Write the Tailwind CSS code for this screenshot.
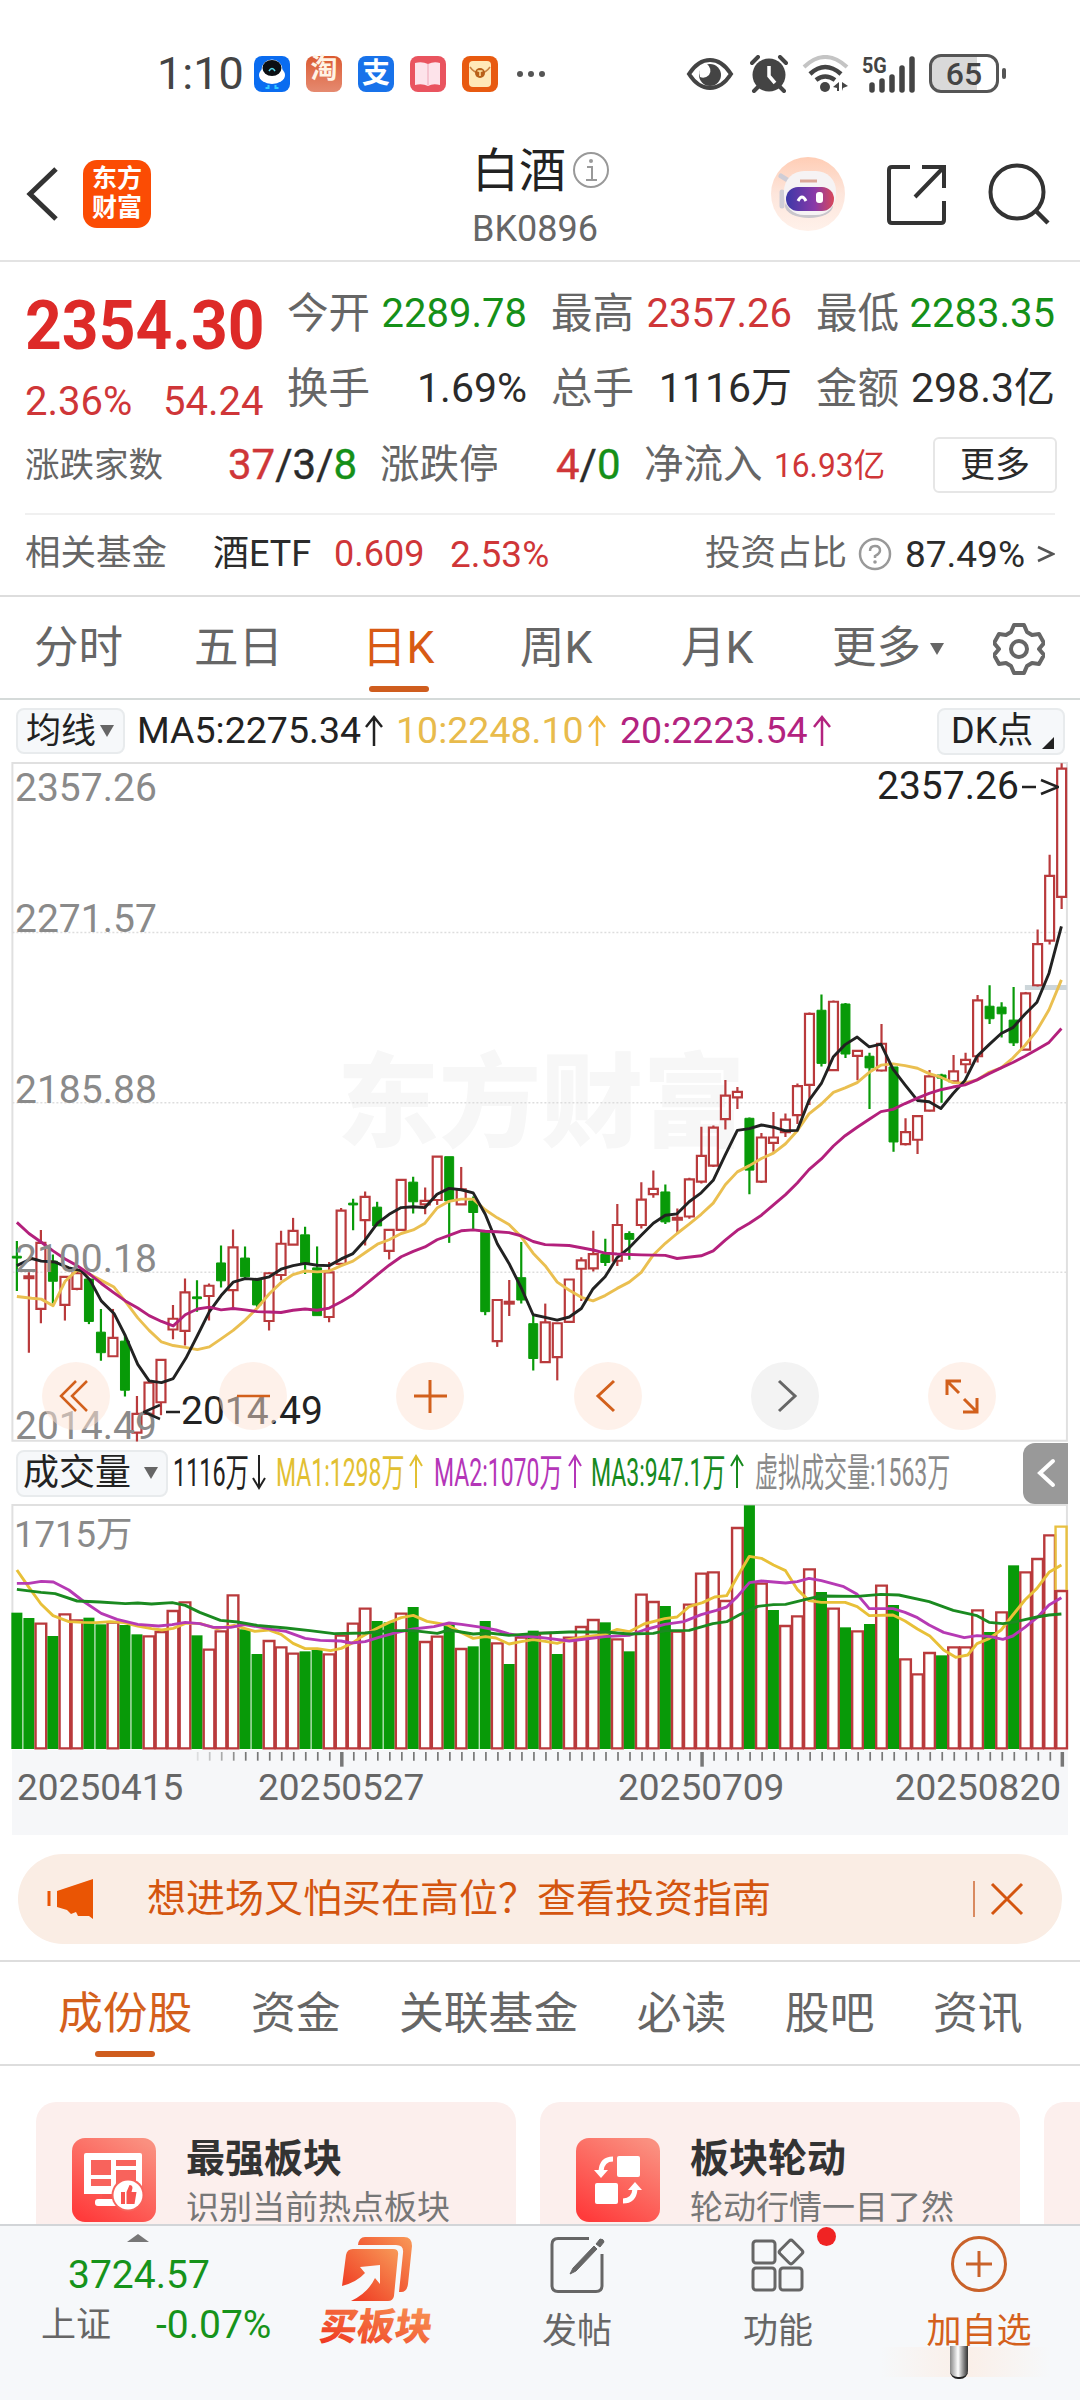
<!DOCTYPE html>
<html lang="zh-CN">
<head>
    <meta charset="UTF-8">
    <meta name="viewport" content="width=device-width, initial-scale=1.0">
    <title>白酒 BK0896</title>
    <script src="https://cdn.jsdelivr.net/npm/@tailwindcss/browser@4"></script>
    <style>
        body {
            font-family: Roboto, 'Noto Sans CJK SC', sans-serif;
        }
    </style>
</head>
<body class="w-[1080px] h-[2400px] overflow-hidden bg-white text-[#666] leading-none whitespace-nowrap">
    <div class="w-[1080px] h-[2400px] flex flex-col overflow-hidden">

        <!-- Status bar -->
        <div class="h-[147px] shrink-0 flex items-center pl-[157px] pr-[74px] text-[#444]">
            <span class="text-[45px] w-[97px]">1:10</span>
            <div class="flex items-center gap-4">
                <svg class="w-9 h-9" viewBox="0 0 36 36">
                    <rect width="36" height="36" rx="8" fill="#0a6cf0"/>
                    <ellipse cx="18" cy="19" rx="13" ry="9" fill="#fff"/>
                    <circle cx="18" cy="14" r="10.500" fill="#fff"/>
                    <ellipse cx="18" cy="12" rx="9.500" ry="8" fill="#0b0f14"/>
                    <path d="M15 15q3-5 6 0" fill="none" stroke="#5de" stroke-width="1.500"/>
                    <path d="M14.500 29v3h-3M21.500 29v3h3" stroke="#3cf" stroke-width="2" fill="none"/>
                </svg>
                <span class="w-9 h-9 rounded-lg bg-linear-to-b from-[#db5a30] to-[#e58a70] text-[#fff3e4] text-[27px] font-bold flex justify-center">淘</span>
                <span class="w-9 h-9 rounded-lg bg-[#1872ea] text-white text-[28px] font-bold flex items-center justify-center">支</span>
                <svg class="w-9 h-9" viewBox="0 0 36 36">
                    <rect width="36" height="36" rx="8" fill="#e9545f"/>
                    <path d="M5 7q7-2 13 1 6-3 12-1v22q-7-2-12 1-6-3-13-1z" fill="#fde3ea"/>
                    <path d="M18 8v21" stroke="#f5c4d0" stroke-width="2"/>
                </svg>
                <svg class="w-9 h-9" viewBox="0 0 36 36">
                    <rect width="36" height="36" rx="8" fill="#e85a10"/>
                    <rect x="7" y="5" width="22" height="26" rx="4" fill="#ffe8b8"/>
                    <path d="M8 11q4 6 10 6t10-6" fill="none" stroke="#c98040" stroke-width="1.500"/>
                    <circle cx="18" cy="17" r="5" fill="#b8601a"/>
                    <path d="M15.500 15h5M18 15v5" stroke="#ffe2a0" stroke-width="1.500"/>
                </svg>
            </div>
            <div class="flex gap-[5px] ml-[19px]">
                <i class="w-[6px] h-[6px] rounded-full bg-[#555]"></i>
                <i class="w-[6px] h-[6px] rounded-full bg-[#555]"></i>
                <i class="w-[6px] h-[6px] rounded-full bg-[#555]"></i>
            </div>
            <svg class="w-[48px] h-[34px] ml-auto" viewBox="0 0 48 34">
                <path d="M3 17Q12 3 24 3t21 14Q36 31 24 31T3 17z" fill="none" stroke="#444" stroke-width="4"/>
                <circle cx="24" cy="18" r="11" fill="#444"/>
                <path d="M20 6q7 6 3 12-4 4-9 2-3-9 6-14z" fill="#fff"/>
            </svg>
            <svg class="w-[38px] h-[38px] ml-[16px]" viewBox="0 0 38 38">
                <circle cx="19" cy="20" r="16.500" fill="#444"/>
                <path d="M2 8l6-6M36 8l-6-6M9 31l-5 5M29 31l5 5" stroke="#444" stroke-width="4" stroke-linecap="round" fill="none"/>
                <path d="M19 11v10l6 7" stroke="#fff" stroke-width="3.500" fill="none"/>
            </svg>
            <svg class="w-[48px] h-[38px] ml-[14px]" viewBox="0 0 48 38">
                <path d="M2 12Q23-8 45 12" stroke="#c4c4c4" stroke-width="4" fill="none"/>
                <path d="M8 19Q23 5 39 19" stroke="#444" stroke-width="4.500" fill="none"/>
                <path d="M14 25q9-7 19 0" stroke="#444" stroke-width="4.500" fill="none"/>
                <circle cx="23" cy="32" r="5" fill="#444"/>
                <path d="M37 27v9h-2v-3l-4-1zM40 27v9l1-3 5-2z" fill="#444"/>
            </svg>
            <svg class="w-[56px] h-[38px] ml-[12px] overflow-visible" viewBox="0 0 56 38">
                <text x="0" y="18" font-size="22" font-weight="bold" transform="scale(.9 1)" fill="#444">5G</text>
                <path d="M10 30v5M20 26v9M30 22v13M40 13v22M50 4v31" stroke="#444" stroke-width="5.500" stroke-linecap="round"/>
            </svg>
            <div class="w-[70px] h-[39px] ml-[11px] border-[3px] border-[#555] rounded-[12px] bg-linear-to-r from-[#d9d9d9] from-70% to-white to-70% flex items-center justify-center text-[32px] font-medium">65</div>
            <i class="w-[4px] h-[11px] ml-[3px] rounded bg-[#555]"></i>
        </div>

        <!-- Title bar -->
        <div class="h-[115px] shrink-0 border-b-2 border-[#e3e3e3] flex relative pb-1">
            <svg class="w-[34px] h-[58px] ml-[26px] mt-[18px]" viewBox="0 0 34 58">
                <path d="M30 4L4 29l26 25" fill="none" stroke="#333" stroke-width="5"/>
            </svg>
            <div class="w-[68px] h-[68px] ml-[23px] mt-[13px] rounded-[14px] bg-[#fb4c04] text-white text-[25px] font-bold leading-[29px] text-center pt-[4px]">东方<br>财富</div>
            <div class="ml-[321px] w-[150px]">
                <div class="flex items-center h-[46px]">
                    <span class="text-[47px] text-[#222]">白酒</span>
                    <svg class="w-[38px] h-[38px] ml-[6px]" viewBox="0 0 38 38">
                        <circle cx="19" cy="19" r="17" fill="none" stroke="#999" stroke-width="2"/>
                        <path d="M15 16h5v13M14 29h11" stroke="#999" stroke-width="2" fill="none"/>
                        <circle cx="19" cy="10" r="2" fill="#999"/>
                    </svg>
                </div>
                <div class="text-[36px] mt-[18px]">BK0896</div>
            </div>
            <svg class="w-[76px] h-[76px] ml-[148px] mt-[9px]" viewBox="0 0 76 76">
                <defs>
                    <linearGradient id="visor" x1="0" x2="1"><stop offset="0" stop-color="#3c38a8"/><stop offset=".6" stop-color="#8a3aa8"/><stop offset="1" stop-color="#d8485a"/></linearGradient>
                    <linearGradient id="halo" y1="0" y2="1" x2="0"><stop offset="0" stop-color="#ffcdb5"/><stop offset=".5" stop-color="#fde6dc"/><stop offset="1" stop-color="#fff1ea"/></linearGradient>
                </defs>
                <circle cx="38" cy="38" r="37" fill="url(#halo)"/>
                <ellipse cx="39" cy="50" rx="24" ry="12" fill="#c9c6cc"/>
                <path d="M11 20l8 5M12 36v14" stroke="#cfcdd6" stroke-width="5" stroke-linecap="round"/>
                <rect x="14" y="15" width="52" height="44" rx="20" fill="#f6f3f4"/>
                <path d="M30 25h17" stroke="#dca898" stroke-width="3" fill="none"/>
                <rect x="16" y="31" width="48" height="24" rx="12" fill="url(#visor)"/>
                <path d="M28 45q4-8 8 0" stroke="#fff" stroke-width="3" fill="none"/>
                <rect x="46" y="36" width="7" height="11" rx="3" fill="#fff"/>
            </svg>
            <svg class="w-[62px] h-[62px] ml-[39px] mt-[16px]" viewBox="0 0 62 62">
                <path d="M25 4H7q-3 0-3 3v50q0 3 3 3h49q3 0 3-3V38" fill="none" stroke="#333" stroke-width="4"/>
                <path d="M37 4h22v21M58 5L30 34" fill="none" stroke="#333" stroke-width="4"/>
            </svg>
            <svg class="w-[62px] h-[62px] ml-[41px] mt-[16px]" viewBox="0 0 62 62">
                <circle cx="29" cy="29" r="26.500" fill="none" stroke="#333" stroke-width="4"/>
                <path d="M48 48l12 12" stroke="#333" stroke-width="4.500"/>
            </svg>
        </div>

        <!-- Quote -->
        <div class="h-[335px] shrink-0 px-[25px] pt-[14px] border-b-2 border-[#ddd]">
            <div class="flex">
                <div class="w-[263px]">
                    <div class="h-[98px] flex items-center text-[69px] font-bold text-[#dd2a28]"><span class="origin-left scale-x-[0.93]">2354.30</span></div>
                    <div class="h-[56px] flex items-center text-[40px] text-[#cf3638]"><span class="w-[138px]">2.36%</span><span>54.24</span></div>
                </div>
                <div class="text-[40px]">
                    <div class="flex h-[75px] items-center">
                        <div class="w-[240px] flex items-center justify-between"><span class="text-[41.500px]">今开</span><span class="text-[#159018]">2289.78</span></div>
                        <div class="w-[241px] ml-[24px] flex items-center justify-between"><span class="text-[41.500px]">最高</span><span class="text-[#cf3638]">2357.26</span></div>
                        <div class="w-[239px] ml-[24px] flex items-center justify-between"><span class="text-[41.500px]">最低</span><span class="text-[#159018]">2283.35</span></div>
                    </div>
                    <div class="flex h-[75px] items-center">
                        <div class="w-[240px] flex items-center justify-between"><span class="text-[41.500px]">换手</span><span class="text-[#2b2b2b] text-[41px]">1.69%</span></div>
                        <div class="w-[241px] ml-[24px] flex items-center justify-between"><span class="text-[41.500px]">总手</span><span class="text-[#2b2b2b] text-[41px]">1116万</span></div>
                        <div class="w-[239px] ml-[24px] flex items-center justify-between"><span class="text-[41.500px]">金额</span><span class="text-[#2b2b2b] text-[41px]">298.3亿</span></div>
                    </div>
                </div>
            </div>
            <div class="flex h-[70px] items-center text-[39.500px]">
                <span class="w-[203px] text-[34.500px]">涨跌家数</span>
                <span class="w-[152px] text-[42px] text-[#2b2b2b] [-webkit-text-stroke:0.4px]"><span class="text-[#cf3638]">37</span>/3/<span class="text-[#159018]">8</span></span>
                <span class="w-[176px]">涨跌停</span>
                <span class="w-[88px] text-[42px] text-[#2b2b2b] [-webkit-text-stroke:0.4px]"><span class="text-[#cf3638]">4</span>/<span class="text-[#159018]">0</span></span>
                <span class="w-[130px]">净流入</span>
                <span class="w-[108px] text-[33px] text-[#cf3638]"><span class="inline-block origin-left scale-x-[0.96]">16.93亿</span></span>
                <span class="w-[124px] h-[56px] ml-auto mr-[-2px] border-2 border-[#e6e6e6] rounded-md flex items-center justify-center text-[35px] text-[#2b2b2b]">更多</span>
            </div>
            <div class="h-[2px] mt-[13px] bg-[#f0f0f0]"></div>
            <div class="flex h-[78px] items-center text-[36px]">
                <span class="w-[188px] text-[35.500px]">相关基金</span>
                <span class="w-[121px] text-[36px] text-[#2b2b2b]">酒ETF</span>
                <span class="w-[116px] text-[#cf3638]">0.609</span>
                <span class="text-[37px] text-[#cf3638]">2.53%</span>
                <span class="ml-auto text-[35.500px]">投资占比</span>
                <svg class="w-[34px] h-[34px] ml-[11px]" viewBox="0 0 34 34">
                    <circle cx="17" cy="17" r="15" fill="none" stroke="#999" stroke-width="2.500"/>
                    <path d="M12 14q0-5 5-5t5 4.500q0 3-5 5.500v2" fill="none" stroke="#999" stroke-width="2.500"/>
                    <circle cx="17" cy="25" r="1.800" fill="#999"/>
                </svg>
                <span class="ml-[13px] text-[37px] text-[#2b2b2b]">87.49%</span>
                <svg class="w-[18px] h-[22px] ml-[12px]" viewBox="0 0 18 22"><path d="M1 4l15 7-15 7" fill="none" stroke="#555" stroke-width="2.500"/></svg>
            </div>
        </div>

        <!-- Period tabs -->
        <div class="h-[103px] shrink-0 border-b-2 border-[#d5dad9] flex items-center text-[44.500px] pl-[34px] pt-[2px] relative">
            <span class="w-[160px]">分时</span>
            <span class="w-[168px]">五日</span>
            <span class="w-[158px] text-[#d85a14] relative">日K<i class="absolute left-[7px] -bottom-[21px] w-[60px] h-[6px] rounded bg-[#cf5d1e]"></i></span>
            <span class="w-[161px]">周K</span>
            <span class="w-[151px]">月K</span>
            <span>更多</span>
            <svg class="w-[14px] h-[12px] ml-[9px]" viewBox="0 0 14 12"><path d="M0 0h14L7 12z" fill="#666"/></svg>
            <svg class="w-[52px] h-[54px] ml-[49px]" viewBox="0 0 52 54">
                <path d="M21 3h10l3 7 5 3 7-1 5 9-5 6 5 6-5 9-7-1-5 3-3 7H21l-3-7-5-3-7 1-5-9 5-6-5-6 5-9 7 1 5-3z" fill="none" stroke="#666" stroke-width="4" stroke-linejoin="round"/>
                <circle cx="26" cy="27" r="8" fill="none" stroke="#666" stroke-width="4"/>
            </svg>
        </div>

        <!-- Moving average legend -->
        <div class="h-[62px] shrink-0 flex items-center pl-[16px] pr-[15px] text-[37.500px]">
            <div class="w-[109px] h-[46px] border-2 border-[#e8ebed] bg-[#f6f8fa] rounded-lg flex items-center pl-[8px] text-[35px] text-[#222]">均线
                <svg class="w-[14px] h-[12px] ml-[4px]" viewBox="0 0 14 12"><path d="M0 0h14L7 12z" fill="#666"/></svg>
            </div>
            <span class="ml-[12px] w-[227px] text-[#222]">MA5:2275.34</span>
            <svg class="w-[20px] h-[32px] text-[#222]" viewBox="0 0 20 32"><path d="M10 31V2M2 12l8-10 8 10" fill="none" stroke="currentColor" stroke-width="2.500"/></svg>
            <span class="ml-[12px] w-[191px] text-[#e8bb4c]">10:2248.10</span>
            <svg class="w-[20px] h-[32px] text-[#f0b840]" viewBox="0 0 20 32"><path d="M10 31V2M2 12l8-10 8 10" fill="none" stroke="currentColor" stroke-width="2.500"/></svg>
            <span class="ml-[13px] w-[192px] text-[#b3237f]">20:2223.54</span>
            <svg class="w-[20px] h-[32px] text-[#b3237f]" viewBox="0 0 20 32"><path d="M10 31V2M2 12l8-10 8 10" fill="none" stroke="currentColor" stroke-width="2.500"/></svg>
            <div class="w-[128px] h-[47px] ml-auto border-2 border-[#e8ebed] bg-[#f6f8fa] rounded-lg flex items-center pl-[12px] text-[36px] text-[#222]">DK点
                <svg class="w-[12px] h-[12px] ml-[9px] mt-[24px]" viewBox="0 0 12 12"><path d="M12 0v12H0z" fill="#222"/></svg>
            </div>
        </div>

        <!-- Candles -->
        <div class="h-[680px] shrink-0 relative text-[39px] text-[#8a8a8a]">
            <div class="absolute left-[337px] top-[291px] text-[102px] font-black text-[#f7f7f7]">东方财富</div>
            <svg id="kline" class="absolute inset-0 w-[1080px] h-[680px]" viewBox="0 27 3136 1523" preserveAspectRatio="none"></svg>
            <span class="absolute left-[15px] top-[7px]">2357.26</span>
            <span class="absolute left-[15px] top-[138px]">2271.57</span>
            <span class="absolute left-[15px] top-[309px]">2185.88</span>
            <span class="absolute left-[15px] top-[478px]">2100.18</span>
            <span class="absolute left-[15px] top-[645px]">2014.49</span>
            <div class="absolute left-[877px] top-[5px] text-[#222] flex items-center">2357.26
                <svg class="w-[38px] h-[22px] ml-[2px]" viewBox="0 0 38 22"><path d="M1 11h14M20 4l17 7-17 7" fill="none" stroke="#222" stroke-width="2.500"/></svg>
            </div>
            <div class="absolute left-[143px] top-[630px] text-[#222] flex items-center">
                <svg class="w-[38px] h-[22px]" viewBox="0 0 38 22"><path d="M23 11h14M17 4L1 11l16 7" fill="none" stroke="#222" stroke-width="2.500"/></svg>2014.49
            </div>
            <div class="absolute left-[42px] right-[84px] top-[600px] flex justify-between">
                <svg class="w-[68px] h-[68px]" viewBox="0 0 68 68"><circle cx="34" cy="34" r="34" fill="#fde3d5" opacity=".5"/><path d="M34 19L19 34l15 15M45 19L30 34l15 15" fill="none" stroke="#d2601c" stroke-width="2.500"/></svg>
                <svg class="w-[68px] h-[68px]" viewBox="0 0 68 68"><circle cx="34" cy="34" r="34" fill="#fde3d5" opacity=".5"/><path d="M18 34h33" stroke="#d2601c" stroke-width="2.500"/></svg>
                <svg class="w-[68px] h-[68px]" viewBox="0 0 68 68"><circle cx="34" cy="34" r="34" fill="#fde3d5" opacity=".5"/><path d="M18 34h33M34 18v33" stroke="#d2601c" stroke-width="3"/></svg>
                <svg class="w-[68px] h-[68px]" viewBox="0 0 68 68"><circle cx="34" cy="34" r="34" fill="#fde3d5" opacity=".5"/><path d="M40 19L24 34l16 15" fill="none" stroke="#d2601c" stroke-width="3"/></svg>
                <svg class="w-[68px] h-[68px]" viewBox="0 0 68 68"><circle cx="34" cy="34" r="34" fill="#f3f3f3"/><path d="M28 19l16 15-16 15" fill="none" stroke="#666" stroke-width="3"/></svg>
                <svg class="w-[68px] h-[68px]" viewBox="0 0 68 68"><circle cx="34" cy="34" r="34" fill="#fde3d5" opacity=".5"/><path d="M19 33V19h14M19 19l12 12M36 37l13 13M49 36v14H35" fill="none" stroke="#d2601c" stroke-width="3"/></svg>
            </div>
        </div>

        <!-- Volume legend -->
        <div class="h-[62px] shrink-0 flex items-center pl-[16px] relative text-[38px]">
            <div class="w-[152px] h-[47px] border-2 border-[#e8ebed] bg-[#f6f8fa] rounded-lg flex items-center pl-[5px] text-[36px] text-[#222]">成交量
                <svg class="w-[14px] h-[12px] ml-[13px]" viewBox="0 0 14 12"><path d="M0 0h14L7 12z" fill="#666"/></svg>
            </div>
            <svg class="w-[785px] h-[60px] ml-[5px]" viewBox="0 -5 785 60" font-size="39">
                <g fill="#222" stroke="#222"><text transform="translate(0 38) scale(.6 1)" stroke="none">1116万</text><path d="M86 7v33M80 30l6 10 6-10" fill="none" stroke-width="2"/></g>
                <g fill="#e2c032" stroke="#e2c032"><text transform="translate(103 38) scale(.59 1)" stroke="none">MA1:1298万</text><path d="M243 40V8M237 18l6-10 6 10" fill="none" stroke-width="2"/></g>
                <g fill="#b436b8" stroke="#b436b8"><text transform="translate(261 38) scale(.59 1)" stroke="none">MA2:1070万</text><path d="M402 40V8M396 18l6-10 6 10" fill="none" stroke-width="2"/></g>
                <g fill="#178a1e" stroke="#178a1e"><text transform="translate(418 38) scale(.59 1)" stroke="none">MA3:947.1万</text><path d="M564 40V8M558 18l6-10 6 10" fill="none" stroke-width="2"/></g>
                <text transform="translate(582 38) scale(.59 1)" fill="#8a8a8a">虚拟成交量:1563万</text>
            </svg>
            <div class="w-[45px] h-[61px] ml-auto mr-[12px] rounded-l-[12px] bg-[#999] flex items-center justify-center">
                <svg class="w-[20px] h-[30px]" viewBox="0 0 20 30"><path d="M17 3L4 15l13 12" fill="none" stroke="#fff" stroke-width="4" stroke-linecap="round"/></svg>
            </div>
        </div>

        <!-- Volume bars and time axis -->
        <div class="h-[331px] shrink-0 relative">
            <div class="absolute left-[12px] right-[12px] top-[246px] h-[85px] bg-[#f6f7f9]"></div>
            <svg id="volume" class="absolute inset-0 w-[1080px] h-[331px]" viewBox="0 222 3136 993" preserveAspectRatio="none"></svg>
            <span class="absolute left-[14px] top-[13px] text-[36.500px] text-[#8a8a8a]">1715万</span>
            <div class="absolute left-[17px] right-[19px] top-[265px] flex text-[37px]">
                <span class="w-[241px]">20250415</span>
                <span class="w-[360px]">20250527</span>
                <span>20250709</span>
                <span class="ml-auto">20250820</span>
            </div>
        </div>

        <!-- Banner -->
        <div class="h-[90px] shrink-0 mx-[18px] mt-[19px] rounded-[45px] bg-[#faede4] flex items-center pl-[29px] pr-[38px] text-[#d4550f]">
            <svg class="w-[48px] h-[42px]" viewBox="0 0 48 42"><path d="M2 13v15" stroke="#ea5504" stroke-width="3"/><path d="M10 13L46 1v40l-4-3H31l-2-4-5 2-4-4-10-3z" fill="#ea5504"/></svg>
            <span class="text-[39px] ml-[52px]">想进场又怕买在高位？查看投资指南</span>
            <i class="w-[2px] h-[36px] ml-auto bg-[#d98a60]"></i>
            <svg class="w-[34px] h-[34px] ml-[15px]" viewBox="0 0 34 34"><path d="M2 2l30 30M32 2L2 32" stroke="#d4550f" stroke-width="3"/></svg>
        </div>

        <!-- Content tabs -->
        <div class="h-[106px] shrink-0 mt-[16px] pt-[3px] border-y-2 border-[#ddd] flex items-center gap-[58.500px] pl-[58px] text-[44.800px]">
            <span class="relative text-[#d4601c]">成份股<i class="absolute left-[37px] -bottom-[20px] w-[60px] h-[6px] rounded bg-[#cf5d1e]"></i></span>
            <span>资金</span>
            <span>关联基金</span>
            <span>必读</span>
            <span>股吧</span>
            <span>资讯</span>
        </div>

        <!-- Feature cards -->
        <div class="h-[158px] shrink-0 pt-[36px] pl-[36px] flex gap-[24px] overflow-hidden">
            <div class="w-[480px] h-[150px] shrink-0 rounded-[20px] bg-[#fcefed] pl-[36px] pt-[36px] flex">
                <svg class="w-[84px] h-[84px]" viewBox="0 0 84 84">
                    <defs><linearGradient id="tile" x1=".2" y1="1" x2=".8" y2="0"><stop offset="0" stop-color="#ff3b3b"/><stop offset="1" stop-color="#fa9080"/></linearGradient></defs>
                    <rect width="84" height="84" rx="13" fill="url(#tile)"/>
                    <path d="M14 15h54q2 0 2 2v39H12V17q0-2 2-2z" fill="#fff"/>
                    <path d="M19 22h20v15H19zM19 41h20v7H19zM44 22h20v6H44zM44 32h20v16H44z" fill="#f8635c"/>
                    <path d="M30 56h12v6H30z" fill="#f8534f"/>
                    <rect x="23" y="61" width="28" height="7" rx="3" fill="#fff"/>
                    <circle cx="56" cy="57" r="16.500" fill="#f8635c"/><circle cx="56" cy="57" r="14.500" fill="#fff"/>
                    <path d="M49 54h4v12h-4zM54.500 54l3-7q3 0 3 3l-1 4h5l-2 12h-8z" fill="#f8534f"/>
                </svg>
                <div class="ml-[30px]">
                    <div class="text-[39px] mt-[2px] font-bold text-[#333]">最强板块</div>
                    <div class="text-[33px] mt-[12px] text-[#777]">识别当前热点板块</div>
                </div>
            </div>
            <div class="w-[480px] h-[150px] shrink-0 rounded-[20px] bg-[#fcefed] pl-[36px] pt-[36px] flex">
                <svg class="w-[84px] h-[84px]" viewBox="0 0 84 84">
                    <rect width="84" height="84" rx="13" fill="url(#tile)"/>
                    <rect x="41" y="18" width="23" height="21" rx="2" fill="#fff"/>
                    <rect x="19" y="45" width="23" height="21" rx="2" fill="#fff"/>
                    <path d="M37 21q-11 0-12 12M47 63q11 0 12-12" fill="none" stroke="#fff" stroke-width="5"/>
                    <path d="M18 32h14l-7 8zM52 52h14l-7-8z" fill="#fff"/>
                </svg>
                <div class="ml-[30px]">
                    <div class="text-[39px] mt-[2px] font-bold text-[#333]">板块轮动</div>
                    <div class="text-[33px] mt-[12px] text-[#777]">轮动行情一目了然</div>
                </div>
            </div>
            <div class="w-[480px] h-[150px] shrink-0 rounded-[20px] bg-[#fcefed]"></div>
        </div>

        <!-- Bottom bar -->
        <div class="h-[176px] shrink-0 bg-[#f6f8fa] border-t-2 border-[#d2d5d8] relative flex text-[35px]">
            <div class="w-[277px] pt-[8px]">
                <svg class="w-[22px] h-[8px] ml-[127px]" viewBox="0 0 22 8"><path d="M0 8L11 0l11 8z" fill="#777"/></svg>
                <div class="ml-[68px] mt-[14px] text-[39px] text-[#16931b]">3724.57</div>
                <div class="ml-[41px] mt-[11px] flex items-center"><span class="w-[115px]">上证</span><span class="text-[39px] text-[#16931b]">-0.07%</span></div>
            </div>
            <div class="w-[200px] pt-[10px] flex flex-col items-center">
                <svg class="w-[72px] h-[68px]" viewBox="0 0 72 68">
                    <defs><linearGradient id="buy" x1="0" y1="1" x2="1" y2="0"><stop offset="0" stop-color="#ee2f1c"/><stop offset="1" stop-color="#f89a58"/></linearGradient></defs>
                    <path d="M17 9q1-8 7-8h39q8 0 8 9l-4 38q-1 8-7 8h-2l4-39q1-8-7-8z" fill="url(#buy)"/>
                    <path d="M12 13h40q6 0 5 6l-4 41q-1 5-6 5H10q17-8 24-23l5 6V29l-20 2 5 6Q16 46 1 50l4-31q1-6 7-6z" fill="url(#buy)"/>
                </svg>
                <svg class="w-[122px] h-[48px] mt-[-5px]" viewBox="0 0 122 48">
                    <text x="8" y="41" font-size="37.500" font-weight="900" fill="url(#buy)" transform="skewX(-8)">买板块</text>
                </svg>
            </div>
            <div class="w-[200px] pt-[10px] flex flex-col items-center">
                <svg class="w-[56px] h-[58px]" viewBox="0 0 56 58">
                    <path d="M40 2.500H9q-6 0-6 6v41q0 6 6 6h38q6 0 6-6V18" fill="none" stroke="#666" stroke-width="3"/>
                    <path d="M45 10L24 32l-3 6 6-3 21-22zM47 8l4-5q4 0 4 3l-4 5z" fill="#666" stroke="#666"/>
                </svg>
                <span class="mt-[20px]">发帖</span>
            </div>
            <div class="w-[202px] pt-[10px] flex flex-col items-center relative">
                <svg class="w-[56px] h-[58px]" viewBox="0 0 56 58" fill="none" stroke="#666" stroke-width="3">
                    <rect x="3" y="5" width="22" height="22" rx="3"/>
                    <rect x="3" y="32" width="22" height="22" rx="3"/>
                    <rect x="30" y="32" width="22" height="22" rx="3"/>
                    <rect x="32" y="7" width="18" height="18" rx="2.500" transform="rotate(45 41 16)"/>
                </svg>
                <span class="mt-[20px]">功能</span>
                <i class="absolute left-[140px] top-[1px] w-[19px] h-[19px] rounded-full bg-[#f02323]"></i>
            </div>
            <div class="w-[200px] pt-[10px] flex flex-col items-center text-[#d4601c]">
                <svg class="w-[58px] h-[58px]" viewBox="0 0 58 58" fill="none" stroke="#c9622a" stroke-width="3">
                    <circle cx="29" cy="28" r="26.500"/><path d="M16 28h26M29 15v26"/>
                </svg>
                <span class="mt-[20px]">加自选</span>
            </div>
            <div class="absolute left-[880px] top-[121px] w-[170px] h-[30px] bg-linear-to-r from-white/0 via-[#fde9dc] to-white/0 opacity-60"></div>
            <div class="absolute left-[950px] top-[120px] w-[18px] h-[33px] rounded-b-[8px] border-b-2 border-[#222] bg-linear-to-r from-[#888] via-white via-45% to-[#333]"></div>
        </div>
    </div>

    <script>
        const NS = 'http://www.w3.org/2000/svg';
        const RED = '#b93a3c', GREEN = '#089a08';
        const kline = document.getElementById('kline');
        const volume = document.getElementById('volume');
        const x = i => 49 + 34.87 * i;

        function draw(svg, tag, attrs) {
            const el = document.createElementNS(NS, tag);
            el.setAttribute('vector-effect', 'non-scaling-stroke');
            for (const k in attrs) el.setAttribute(k, attrs[k]);
            svg.appendChild(el);
        }
        function line(svg, points, color) {
            draw(svg, 'polyline', { points: points, fill: 'none', stroke: color, 'stroke-width': 2.9, 'stroke-linejoin': 'round' });
        }

        // frame and grid
        draw(kline, 'rect', { x: 36, y: 29, width: 3062, height: 1518, fill: 'none', stroke: '#e0e0e0', 'stroke-width': 2 });
        [409, 790, 1170].forEach(y => draw(kline, 'path', { d: `M36 ${y}H3098`, stroke: '#ddd', 'stroke-width': 1.5, 'stroke-dasharray': '2 2' }));
        draw(kline, 'path', { d: 'M2976 532H3098', stroke: '#cdd6da', 'stroke-width': 5 });

        // high, body top, body bottom, low, 1 = up
        const candles = [
            [1100,1134,1138,1212,0],[1170,1179,1183,1350,1],[1075,1104,1252,1284,1],[1130,1145,1190,1240,0],
            [1180,1180,1243,1278,1],[1165,1172,1207,1210,1],[1185,1185,1280,1286,0],[1252,1304,1350,1368,0],
            [1252,1317,1358,1358,1],[1310,1324,1434,1448,0],[1447,1487,1529,1549,1],[1417,1417,1487,1487,1],
            [1366,1366,1461,1490,1],[1243,1274,1298,1320,1],[1184,1215,1301,1334,1],[1188,1225,1229,1258,0],
            [1195,1200,1223,1278,1],[1110,1149,1189,1204,0],[1074,1114,1210,1250,1],[1112,1138,1180,1187,0],
            [1187,1187,1243,1248,0],[1170,1172,1279,1300,1],[1077,1106,1176,1188,1],[1048,1077,1108,1108,1],
            [1068,1086,1152,1174,0],[1112,1160,1267,1267,0],[1147,1170,1270,1282,1],[1026,1032,1151,1155,1],
            [1005,1015,1019,1076,0],[989,1001,1053,1110,1],[1012,1024,1066,1066,0],[1075,1075,1122,1141,1],
            [963,963,1075,1075,1],[956,968,1012,1038,0],[980,1010,1018,1040,1],[911,911,1008,1019,1],
            [911,911,1010,1104,0],[934,984,1018,1018,1],[1000,1010,1036,1075,0],[1080,1080,1258,1266,0],
            [1232,1232,1324,1337,1],[1187,1236,1240,1268,1],[1102,1182,1232,1240,0],[1265,1285,1363,1390,0],
            [1240,1282,1371,1371,1],[1284,1284,1360,1412,1],[1186,1186,1281,1281,1],[1136,1143,1162,1234,1],
            [1077,1129,1161,1168,1],[1095,1130,1148,1156,0],[1017,1064,1144,1156,1],[1078,1083,1096,1142,0],
            [968,1007,1064,1072,1],[942,983,995,1003,1],[973,990,1057,1062,0],[1027,1048,1052,1084,1],
            [958,962,1045,1050,1],[844,909,967,971,1],[841,846,931,934,1],[739,774,827,850,1],
            [755,766,778,804,1],[823,825,941,995,0],[858,868,967,970,1],[811,868,880,900,1],
            [814,828,856,867,1],[747,753,818,838,1],[588,591,750,795,1],[548,583,702,709,0],
            [561,564,717,719,1],[567,569,681,690,0],[672,674,685,740,1],[678,686,712,804,0],
            [614,658,718,720,1],[710,710,878,900,0],[825,856,883,886,1],[818,820,873,905,1],
            [717,731,808,810,1],[725,728,735,790,0],[683,720,742,748,1],[678,694,704,724,1],
            [549,561,686,700,1],[527,574,602,614,0],[565,576,591,644,0],[531,605,656,663,0],
            [542,545,671,671,1],[402,435,527,530,1],[235,282,427,436,1],[30,42,329,356,1]
        ];
        candles.forEach(([high, top, bottom, low, up], i) => {
            const color = up ? RED : GREEN;
            draw(kline, 'path', { d: `M${x(i)} ${high}V${top}M${x(i)} ${bottom}V${low}`, stroke: color, 'stroke-width': 2.2 });
            draw(kline, 'rect', { x: x(i) - 13, y: top, width: 26, height: bottom - top, fill: up ? 'none' : color, stroke: color, 'stroke-width': up ? 2.2 : 1 });
        });

        line(kline, '49,1224 92,1228 120,1230 154,1245 189,1190 224,1165 262,1175 294,1188 331,1203 364,1235 400,1272 433,1300 469,1326 503,1334 538,1338 573,1343 608,1337 642,1319 677,1300 712,1277 747,1250 782,1218 816,1193 851,1175 886,1167 921,1169 956,1167 991,1155 1025,1145 1060,1126 1096,1107 1130,1097 1165,1083 1200,1075 1234,1060 1269,1026 1304,1011 1339,1006 1374,1006 1409,1030 1444,1048 1478,1063 1513,1090 1548,1127 1583,1155 1618,1192 1653,1210 1688,1226 1722,1234 1757,1222 1792,1206 1827,1192 1862,1170 1897,1131 1932,1105 1966,1083 2001,1062 2036,1040 2071,1015 2106,974 2141,945 2176,931 2211,915 2246,903 2281,882 2315,853 2349,815 2385,793 2420,767 2454,757 2489,745 2524,722 2558,706 2593,703 2628,707 2664,713 2698,725 2732,733 2767,745 2802,746 2837,739 2872,722 2907,712 2941,690 2976,662 3011,628 3046,582 3082,515', '#eabf50');
        line(kline, '49,1155 92,1139 120,1145 160,1147 200,1160 235,1166 262,1188 294,1234 331,1262 364,1312 400,1376 433,1413 469,1417 503,1408 540,1362 573,1312 608,1258 642,1222 677,1192 712,1184 747,1186 782,1180 816,1163 851,1155 886,1150 921,1154 956,1155 991,1140 1025,1128 1060,1098 1096,1060 1130,1040 1165,1025 1200,1023 1234,1025 1269,995 1304,982 1339,985 1374,992 1409,1040 1444,1106 1478,1150 1513,1204 1548,1265 1583,1271 1618,1277 1653,1270 1688,1251 1722,1207 1757,1180 1792,1137 1827,1115 1862,1087 1897,1060 1932,1042 1966,1039 2001,1012 2036,992 2071,964 2106,907 2141,852 2176,848 2211,840 2246,845 2281,853 2315,852 2349,785 2385,747 2420,687 2454,660 2489,643 2524,665 2558,659 2593,715 2628,750 2664,785 2698,788 2732,803 2767,770 2802,740 2837,686 2872,660 2907,635 2941,622 2976,592 3011,565 3046,500 3082,395', '#222');
        line(kline, '49,1058 84,1083 119,1102 154,1122 189,1140 224,1155 262,1175 294,1195 331,1216 364,1234 400,1250 433,1267 469,1280 503,1290 538,1265 573,1252 608,1248 642,1254 677,1251 712,1254 747,1258 782,1259 816,1260 851,1255 886,1252 921,1255 956,1250 991,1236 1025,1220 1060,1198 1096,1175 1130,1154 1165,1135 1200,1123 1234,1113 1269,1097 1304,1087 1339,1077 1374,1075 1409,1078 1444,1079 1478,1081 1513,1088 1548,1101 1583,1108 1653,1110 1688,1115 1722,1120 1757,1127 1792,1129 1862,1131 1932,1132 1966,1139 2036,1133 2071,1122 2106,1098 2141,1076 2176,1060 2211,1042 2246,1019 2281,996 2315,970 2349,940 2385,916 2420,887 2454,864 2489,845 2524,827 2558,810 2593,805 2628,792 2664,780 2698,769 2732,761 2767,755 2802,750 2837,739 2872,725 2907,712 2941,700 2976,686 3011,671 3046,655 3082,624', '#b3207c');

        // volume: bar top, 1 = up
        draw(volume, 'path', { d: 'M36 957V225H3098V957', fill: 'none', stroke: '#e0e0e0', 'stroke-width': 2 });
        const bars = [
            [548,0],[564,0],[580,1],[618,0],[552,1],[570,1],[563,0],[583,0],[577,1],[585,0],[613,0],
            [618,1],[605,1],[542,1],[516,1],[616,0],[658,1],[603,1],[495,1],[598,0],[672,0],[632,1],
            [651,1],[670,1],[664,0],[660,0],[672,1],[616,1],[580,1],[535,1],[573,0],[577,0],[550,1],
            [531,0],[635,1],[619,1],[583,0],[656,1],[649,0],[573,0],[639,1],[702,0],[622,1],[602,0],
            [608,1],[672,0],[622,1],[590,1],[569,1],[577,0],[627,1],[664,0],[493,1],[515,1],[528,0],
            [604,1],[523,1],[430,1],[426,1],[512,1],[293,1],[226,0],[460,1],[540,0],[587,1],[558,1],
            [417,1],[486,0],[535,1],[592,0],[603,1],[582,0],[466,1],[525,0],[687,1],[732,1],[668,1],
            [676,0],[651,1],[651,1],[540,1],[606,0],[546,1],[406,0],[426,1],[386,1],[315,1],[482,1]
        ];
        bars.forEach(([top, up], i) => {
            if (up) draw(volume, 'rect', { x: x(i) - 15.5, y: top + 1, width: 31, height: 954 - top, fill: '#fff', stroke: RED, 'stroke-width': 2.4 });
            else draw(volume, 'rect', { x: x(i) - 16, y: top, width: 32, height: 957 - top, fill: GREEN });
        });
        draw(volume, 'path', { d: 'M3065 480V290H3097V480', fill: 'none', stroke: '#e8c040', 'stroke-width': 2.4 });

        line(volume, '49,420 84,472 119,522 154,557 200,575 240,577 280,578 320,575 360,578 400,588 440,596 470,600 503,595 538,580 580,580 630,596 680,586 740,604 780,600 816,613 851,640 886,656 921,656 960,662 991,655 1025,638 1050,620 1085,600 1130,577 1165,563 1200,556 1240,574 1300,585 1330,603 1374,625 1410,620 1440,624 1478,642 1513,635 1548,629 1583,634 1618,640 1653,628 1700,620 1757,613 1792,598 1827,605 1870,582 1930,566 1966,561 2001,530 2040,518 2075,501 2110,497 2141,440 2176,379 2211,385 2246,405 2281,422 2315,478 2349,512 2385,517 2454,517 2489,530 2524,557 2593,555 2628,573 2664,597 2700,618 2740,660 2775,682 2810,675 2837,641 2872,626 2907,600 2941,555 2976,510 3011,475 3046,427 3082,405', '#e8c038');
        line(volume, '49,460 84,460 120,454 155,456 200,480 245,516 294,550 340,568 400,583 460,588 500,584 538,577 580,581 620,592 670,592 710,584 747,590 790,598 830,604 886,625 930,631 990,633 1020,639 1060,635 1100,622 1150,608 1200,597 1260,590 1304,579 1340,583 1400,592 1440,600 1478,612 1513,618 1568,622 1653,633 1700,627 1757,620 1827,616 1870,600 1930,583 1985,575 2036,554 2080,541 2110,531 2141,500 2176,458 2211,453 2281,459 2315,455 2349,445 2385,452 2450,470 2489,493 2524,536 2593,536 2628,547 2664,563 2698,585 2740,607 2800,623 2837,617 2872,619 2912,628 2941,618 2976,592 3011,563 3046,525 3082,503', '#b63ab4');
        line(volume, '49,478 119,487 160,491 224,513 290,516 364,521 400,519 440,522 500,518 538,526 580,547 640,571 690,576 747,586 830,594 900,602 970,611 1060,609 1130,602 1200,602 1270,610 1304,600 1374,612 1420,609 1478,616 1548,611 1583,609 1653,606 1757,606 1827,612 1897,610 1932,602 2001,601 2070,581 2110,575 2150,553 2200,529 2246,524 2281,523 2349,506 2385,498 2489,499 2558,493 2610,495 2698,515 2768,541 2837,557 2872,577 2912,581 2941,577 2976,569 3011,561 3046,555 3082,552', '#1a8a20');

        // ticks fade in from the left, every 30th day is a long one
        for (let i = 15; i < 88; i++) {
            const major = i === 27 || i === 57 || i === 87;
            draw(volume, 'path', {
                d: `M${x(i) + 2} 966V${major ? 1010 : 992}`,
                stroke: '#777', 'stroke-width': major ? 3.5 : 1.7, opacity: Math.min(1, (i - 14) / 5)
            });
        }
    </script>
</body>
</html>
